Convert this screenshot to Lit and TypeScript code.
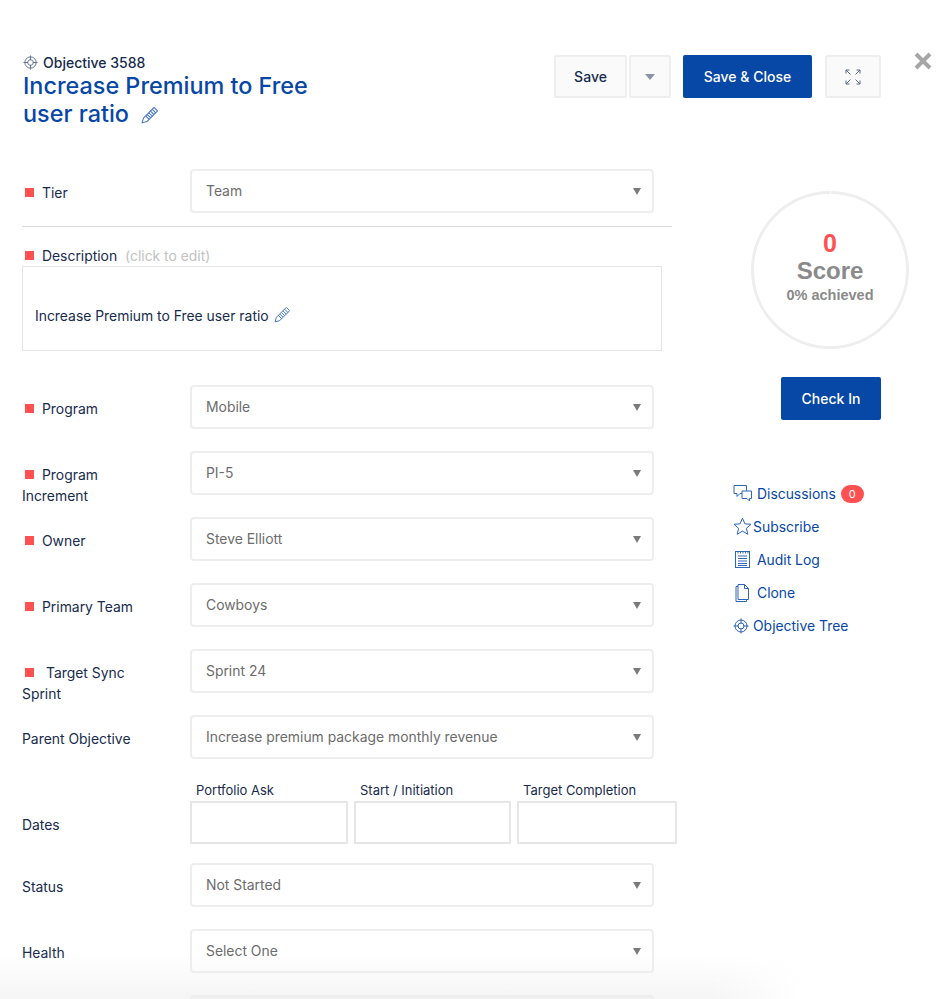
import { LitElement, html, css, svg } from "lit";
import { customElement } from "lit/decorators.js";

const caret = html`<svg class="caret" width="8" height="7" viewBox="0 0 8 7"><path d="M0 0h8L4 7z" fill="#7a7a7a"/></svg>`;

const target = (size: number, color: string) => html`<svg width=${size} height=${size} viewBox="0 0 16 16" fill="none" stroke=${color} stroke-width="1"><circle cx="8" cy="8" r="6"/><circle cx="8" cy="8" r="3"/><path d="M8 0.5V5.5M8 10.5V15.5M0.5 8H5.5M10.5 8H15.5"/></svg>`;

const pencil = (size: number) => html`<svg width=${size} height=${size} viewBox="0 0 16 16" fill="none" stroke="#3f72c4" stroke-width="0.9" stroke-linejoin="round"><path d="M11.6 1.3l3.1 3.1L5.3 13.8 1 15l1.2-4.3z"/><path d="M10 3l3.1 3.1M4.200 8.900l3 3M5.600 7.600l3 3M7.100 6.100l3 3M8.500 4.600l3 3"/></svg>`;

interface Row { label: string; value: string; req?: boolean; wide?: boolean }

const rows1: Row[] = [
  { label: "Program", value: "Mobile", req: true },
  { label: "Program Increment", value: "PI-5", req: true },
  { label: "Owner", value: "Steve Elliott", req: true },
  { label: "Primary Team", value: "Cowboys", req: true },
  { label: "Target Sync Sprint", value: "Sprint 24", req: true, wide: true },
  { label: "Parent Objective", value: "Increase premium package monthly revenue" },
];

const links = [
  { label: "Discussions", indent: true, icon: svg`<path d="M1 1.500h12.500v8H7l-3 3v-3H1z"/><path d="M9 7h9.500v7.500h-2v2.500l-2.500-2.500H9z" fill="#fff"/>`, badge: true },
  { label: "Subscribe", indent: false, icon: svg`<path d="M9.500 1.200l2.400 5.600 6.100.5-4.600 4 1.400 6-5.300-3.200-5.300 3.200 1.400-6-4.600-4 6.100-.5z"/>` },
  { label: "Audit Log", indent: true, icon: svg`<rect x="2.500" y="1.500" width="14" height="16"/><path d="M5 1v2.500M7.500 1v2.500M10 1v2.500M12.500 1v2.500M15 1v2.500" /><path d="M5 6h9M5 8.500h9M5 11h9M5 13.500h9M5 15.500h9"/>` },
  { label: "Clone", indent: true, icon: svg`<path d="M5 1.500h6.500l4 4v11H5z"/><path d="M11.500 1.500v4h4"/><path d="M5 3.500H3v15h10.500v-2"/>` },
];

@customElement("app-root")
export class AppRoot extends LitElement {
  static styles = css`
    :host {
      display: block;
      position: relative;
      width: 944px;
      height: 999px;
      overflow: hidden;
      background: #fff;
      font-family: Inter, "Liberation Sans", sans-serif;
      font-size: 13.9px;
      color: #172b4d;
    }
    .page { padding: 55px 0 0 22px; }
    .header { display: flex; height: 114px; }
    .heading { width: 300px; margin-right: 232px; }
    .eyebrow { display: flex; align-items: center; gap: 5px; height: 14px; font-weight: 500; font-size: 14px; padding-left: 1px; }
    .title { margin: 3px 0 0 1px; font-size: 23.4px; line-height: 27.500px; font-weight: 500; color: #0747a6; }
    .title svg { margin-left: 6px; vertical-align: -2px; }
    .actions { display: flex; align-items: flex-start; }
    .btn { box-sizing: border-box; height: 43px; display: flex; align-items: center; justify-content: center; font-size: 14px; font-weight: 500; border-radius: 2px; }
    .btn.light { background: #fafafa; border: 2px solid #eeeeee; }
    .btn.primary { background: #0747a6; color: #fff; }
    .save { width: 73px; margin-right: 2px; }
    .drop { width: 42px; margin-right: 12px; }
    .saveclose { width: 129px; margin-right: 13px; }
    .expand { width: 56px; }
    .close { margin: -3px 0 0 33px; }
    .body { display: flex; }
    .form { width: 655px; margin-right: 56px; }
    .row { display: grid; grid-template-columns: 168px 464px; height: 44px; margin-bottom: 22px; }
    .label { padding: 14px 40px 0 0; line-height: 21px; }
    .sq { display: inline-block; width: 9px; height: 9px; background: #ff5151; margin: 0 8px 0 3px; vertical-align: 1px; }
    .sq.wide { margin-right: 12px; }
    .select { box-sizing: border-box; height: 44px; border: 2px solid #eeeeee; border-radius: 4px; padding: 0 14px; display: flex; align-items: center; justify-content: space-between; color: #6c6c6c; background: #fff; }
    .select.off { background: #f4f4f4; }
    .caret { margin-right: -3px; }
    .rule { width: 650px; height: 1px; background: #dcdcdc; margin: -9px 0 19px; }
    .desc-label { line-height: 20px; height: 20px; }
    .hint { color: #c2c2c2; margin-left: 4px; }
    .desc { box-sizing: border-box; width: 640px; height: 85px; border: 1px solid #e4e4e4; padding: 39px 0 0 12px; display: flex; align-items: flex-start; gap: 5px; line-height: 20px; margin-bottom: 34px; }
    .dates { display: grid; grid-template-columns: 168px auto; margin-bottom: 19px; margin-top: -1px; }
    .dates .label { padding-top: 35px; }
    .cols { display: flex; gap: 6px; }
    .col-name { font-size: 13px; line-height: 18px; padding: 1px 0 2px 6px; }
    .input { box-sizing: border-box; width: 157px; height: 43px; border: 2px solid #e6e6e6; }
    .input.first { width: 158px; }
    .input.last { width: 160px; }
    .side { width: 190px; }
    .ring { box-sizing: border-box; position: relative; width: 158px; height: 158px; margin: 22px 0 0 18px; border: 3px solid #eeeeee; border-radius: 50%; display: flex; flex-direction: column; align-items: center; padding-top: 37px; font-family: "Liberation Sans", Arial, sans-serif; font-weight: 700; color: #8a8a8a; }
    .ring::before { content: ""; position: absolute; top: -3px; left: 50%; width: 1px; height: 3px; background: #fff; }
    .zero { font-size: 25px; line-height: 24px; color: #ff5151; }
    .score { font-size: 24px; line-height: 30px; margin-top: 1px; }
    .pct { font-size: 14.500px; line-height: 16px; margin-top: 1px; }
    .checkin { width: 100px; margin: 28px 0 0 48px; }
    .links { margin-top: 57px; color: #0747a6; }
    .link { display: flex; align-items: center; height: 33px; }
    .link svg { width: 19px; height: 19px; flex: none; fill: none; stroke: #2f65b8; stroke-width: 1; margin-right: 1px; }
    .link .tree { margin-right: 4px; display: flex; width: 16px; }
    .link .tree svg { width: 16px; height: 16px; margin-right: 0; }
    .link.indent svg { margin-right: 5px; }
    .badge { margin-left: 5px; width: 23px; height: 18px; border-radius: 9px; background: #ff5151; color: #fff; font-size: 11px; display: flex; align-items: center; justify-content: center; }
    .fade { position: absolute; left: 0; right: 0; bottom: 0; height: 45px; pointer-events: none; background: linear-gradient(to bottom, rgba(236,236,236,0), rgba(236,236,236,0.55)); -webkit-mask-image: linear-gradient(to right, #000 75%, transparent 85%); mask-image: linear-gradient(to right, #000 75%, transparent 85%); }
  `;

  private sel(value: string, off = false) {
    return html`<div class="select ${off ? "off" : ""}"><span>${value}</span>${caret}</div>`;
  }

  render() {
    return html`
      <div class="page">
        <div class="header">
          <div class="heading">
            <div class="eyebrow">${target(15, "#5f6f8c")}<span>Objective 3588</span></div>
            <div class="title">Increase Premium to Free user ratio ${pencil(18)}</div>
          </div>
          <div class="actions">
            <div class="btn light save">Save</div>
            <div class="btn light drop"><svg width="10" height="6" viewBox="0 0 10 6"><path d="M0 0h10L5 6z" fill="#8d93a5"/></svg></div>
            <div class="btn primary saveclose">Save &amp; Close</div>
            <div class="btn light expand"><svg width="16" height="16" viewBox="0 0 16 16" fill="none" stroke="#5a6b88" stroke-width="1"><path d="M1 4.500V1h3.500M1 1l4.500 4.500M15 4.500V1h-3.500M15 1l-4.500 4.500M1 11.500V15h3.500M1 15l4.500-4.500M15 11.500V15h-3.500M15 15l-4.500-4.500"/></svg></div>
            <svg class="close" width="18" height="18" viewBox="0 0 18 18"><path d="M2 2l14 14M16 2L2 16" stroke="#a6a6a6" stroke-width="4"/></svg>
          </div>
        </div>
        <div class="body">
          <div class="form">
            <div class="row">
              <div class="label"><span class="sq"></span>Tier</div>
              ${this.sel("Team")}
            </div>
            <div class="rule"></div>
            <div class="desc-label"><span class="sq"></span>Description <span class="hint">(click to edit)</span></div>
            <div class="desc">Increase Premium to Free user ratio ${pencil(17)}</div>
            ${rows1.map((r) => html`
              <div class="row">
                <div class="label">${r.req ? html`<span class="sq ${r.wide ? "wide" : ""}"></span>` : ""}${r.label}</div>
                ${this.sel(r.value)}
              </div>`)}
            <div class="dates">
              <div class="label">Dates</div>
              <div class="cols">
                <div><div class="col-name">Portfolio Ask</div><div class="input first"></div></div>
                <div><div class="col-name">Start / Initiation</div><div class="input"></div></div>
                <div><div class="col-name">Target Completion</div><div class="input last"></div></div>
              </div>
            </div>
            <div class="row"><div class="label">Status</div>${this.sel("Not Started")}</div>
            <div class="row"><div class="label">Health</div>${this.sel("Select One")}</div>
            <div class="row"><div class="label"></div>${this.sel("", true)}</div>
          </div>
          <div class="side">
            <div class="ring">
              <div class="zero">0</div>
              <div class="score">Score</div>
              <div class="pct">0% achieved</div>
            </div>
            <div class="btn primary checkin">Check In</div>
            <div class="links">
              ${links.map((l) => html`
                <div class="link ${l.indent ? "indent" : ""}">
                  <svg viewBox="0 0 19 19">${l.icon}</svg>
                  <span>${l.label}</span>
                  ${l.badge ? html`<span class="badge">0</span>` : ""}
                </div>`)}
              <div class="link"><span class="tree">${target(16, "#2f65b8")}</span><span>Objective Tree</span></div>
            </div>
          </div>
        </div>
      </div>
      <div class="fade"></div>
    `;
  }
}
